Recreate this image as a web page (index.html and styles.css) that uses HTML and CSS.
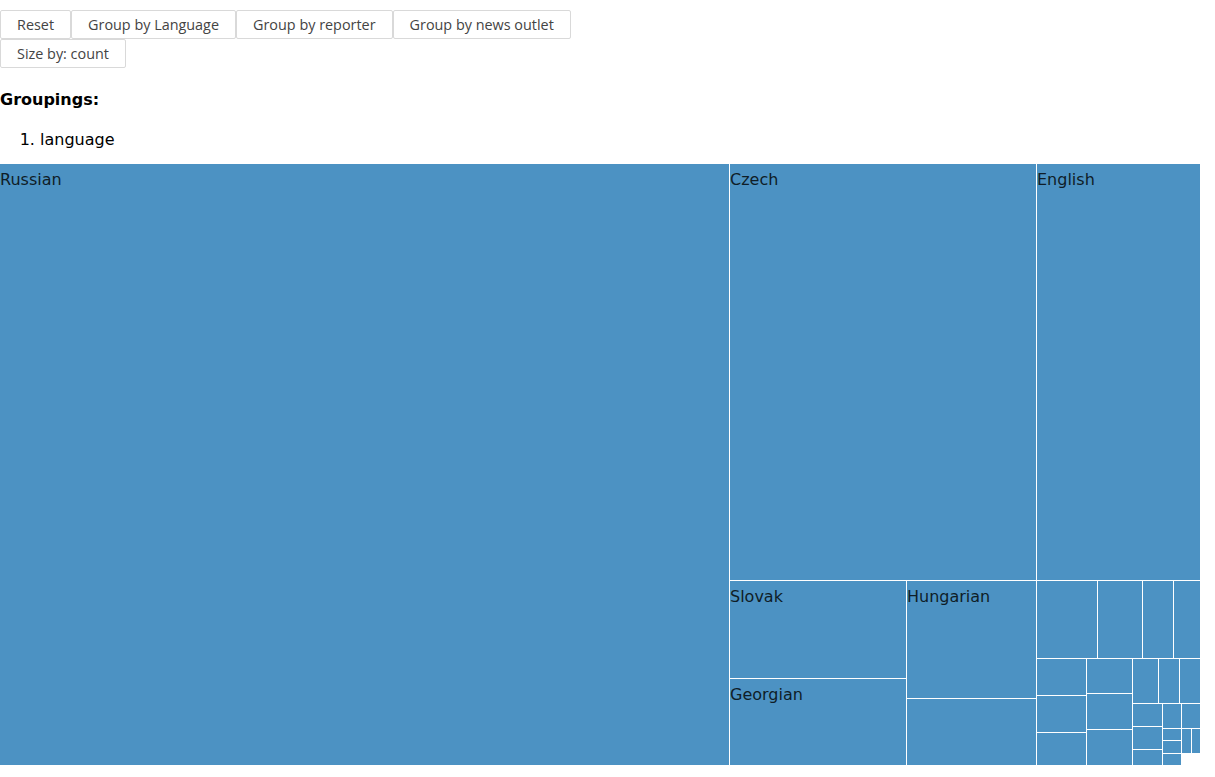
FILE: index.html
```html
<!DOCTYPE html>
<html>
<head>
<meta charset="utf-8">
<title>Treemap</title>
<link rel="stylesheet" href="styles.css">
</head>
<body>
<div class="controls">
  <div class="btn-row">
    <button class="btn">Reset</button>
    <button class="btn">Group by Language</button>
    <button class="btn">Group by reporter</button>
    <button class="btn">Group by news outlet</button>
  </div>
  <div class="btn-row">
    <button class="btn">Size by: count</button>
  </div>
</div>
<h4 class="groupings-title">Groupings:</h4>
<ol class="groupings">
  <li>language</li>
</ol>
<div class="treemap">
  <div class="node" style="left:0px;top:0px;width:729px;height:601px"><span class="label">Russian</span></div>
  <div class="node" style="left:730px;top:0px;width:306px;height:416px"><span class="label">Czech</span></div>
  <div class="node" style="left:1037px;top:0px;width:163px;height:416px"><span class="label">English</span></div>
  <div class="node" style="left:730px;top:417px;width:176px;height:97px"><span class="label">Slovak</span></div>
  <div class="node" style="left:730px;top:515px;width:176px;height:86px"><span class="label">Georgian</span></div>
  <div class="node" style="left:907px;top:417px;width:129px;height:117px"><span class="label">Hungarian</span></div>
  <div class="node" style="left:907px;top:535px;width:129px;height:66px"></div>
  <div class="node" style="left:1037px;top:417px;width:60px;height:77px"></div>
  <div class="node" style="left:1098px;top:417px;width:44px;height:77px"></div>
  <div class="node" style="left:1143px;top:417px;width:30px;height:77px"></div>
  <div class="node" style="left:1174px;top:417px;width:26px;height:77px"></div>
  <div class="node" style="left:1037px;top:495px;width:49px;height:36px"></div>
  <div class="node" style="left:1037px;top:532px;width:49px;height:36px"></div>
  <div class="node" style="left:1037px;top:569px;width:49px;height:32px"></div>
  <div class="node" style="left:1087px;top:495px;width:45px;height:34px"></div>
  <div class="node" style="left:1087px;top:530px;width:45px;height:35px"></div>
  <div class="node" style="left:1087px;top:566px;width:45px;height:35px"></div>
  <div class="node" style="left:1133px;top:495px;width:25px;height:44px"></div>
  <div class="node" style="left:1159px;top:495px;width:20px;height:44px"></div>
  <div class="node" style="left:1180px;top:495px;width:20px;height:44px"></div>
  <div class="node" style="left:1133px;top:540px;width:29px;height:22px"></div>
  <div class="node" style="left:1133px;top:563px;width:29px;height:22px"></div>
  <div class="node" style="left:1133px;top:586px;width:29px;height:15px"></div>
  <div class="node" style="left:1163px;top:540px;width:18px;height:24px"></div>
  <div class="node" style="left:1163px;top:565px;width:18px;height:11px"></div>
  <div class="node" style="left:1163px;top:577px;width:18px;height:12px"></div>
  <div class="node" style="left:1163px;top:590px;width:18px;height:11px"></div>
  <div class="node" style="left:1182px;top:540px;width:18px;height:24px"></div>
  <div class="node" style="left:1182px;top:565px;width:9px;height:24px"></div>
  <div class="node" style="left:1192px;top:565px;width:8px;height:24px"></div>
</div>
</body>
</html>
```

FILE: styles.css
```css
html, body {
  margin: 0;
  padding: 0;
  background: #ffffff;
}

body {
  font-family: "DejaVu Sans", sans-serif;
  font-size: 16px;
  color: #000;
}

.controls {
  padding-top: 10px;
}

.btn-row {
  display: flex;
}

.btn {
  font-family: "Open Sans", "DejaVu Sans", sans-serif;
  font-size: 14.4px;
  color: #444;
  background: #fff;
  border: 1px solid #d9d9d9;
  border-radius: 2px;
  height: 29px;
  padding: 0 16px;
  margin: 0;
  line-height: 27px;
  cursor: pointer;
}

.groupings-title {
  font-size: 16px;
  font-weight: bold;
  margin: 22px 0 21px;
}

.groupings {
  margin: 16px 0 15px;
  padding-left: 40px;
}

.treemap {
  position: relative;
  width: 1200px;
  height: 601px;
  background: #ffffff;
}

.node {
  position: absolute;
  background: #4c92c3;
  overflow: hidden;
}

.label {
  display: block;
  padding-top: 6px;
  color: #0f1d27;
  font-size: 16px;
  white-space: nowrap;
}
```
